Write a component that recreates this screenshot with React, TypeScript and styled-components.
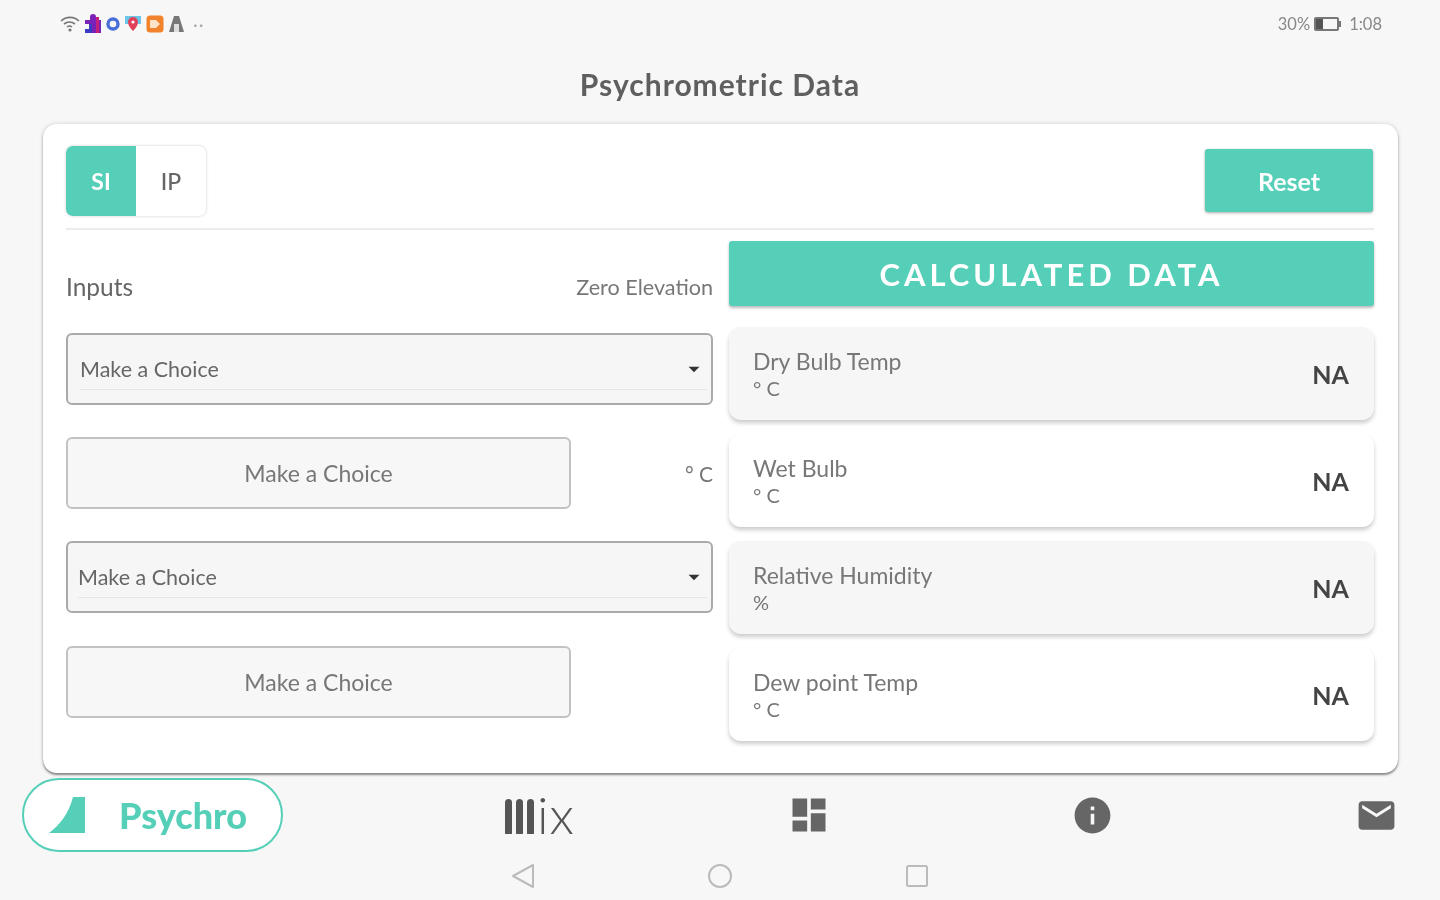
import React from "react";
import styled, { createGlobalStyle } from "styled-components";
import { MdDashboard, MdInfo, MdEmail, MdArrowDropDown } from "react-icons/md";

const TEAL = "#55cfb8";

const results = [
  { label: "Dry Bulb Temp", unit: "° C", tinted: true },
  { label: "Wet Bulb", unit: "° C", tinted: false },
  { label: "Relative Humidity", unit: "%", tinted: true },
  { label: "Dew point Temp", unit: "° C", tinted: false },
];

const App = () => {
  return (
    <Page>
      <GlobalStyle />
      <StatusBar>
        <StatusIcons>
          <svg width="20" height="18" viewBox="0 0 20 18">
            <path d="M1 6a13 13 0 0 1 18 0M4 9a9 9 0 0 1 11 0M7 12a4 4 0 0 1 5 0" fill="none" stroke="#777" strokeWidth="1.6" />
            <circle cx="10" cy="15" r="1.6" fill="#777" />
          </svg>
          <svg width="18" height="20" viewBox="0 0 18 20">
            <path d="M1 6h5V3a3 3 0 0 1 6 0v3h5v13H1v-4h4v-5H1z" fill="#7a22b8" />
            <path d="M1 10h4v5H1v4h7V10z" fill="#3b3bc4" />
            <path d="M12 3h3v16h-3z" fill="#c4207a" />
          </svg>
          <svg width="14" height="14" viewBox="0 0 14 14">
            <circle cx="7" cy="7" r="5" fill="none" stroke="#4a6fd8" strokeWidth="3.4" />
          </svg>
          <svg width="18" height="18" viewBox="0 0 18 18">
            <path d="M1 1h16v8H1z" fill="#6cc6e8" />
            <path d="M9 16c-3-3-5-6-5-9a5 5 0 0 1 10 0c0 3-2 6-5 9z" fill="#e0405a" />
            <circle cx="9" cy="7" r="1.6" fill="#fff" />
          </svg>
          <svg width="18" height="18" viewBox="0 0 18 18">
            <rect x="0.5" y="0.5" width="17" height="17" rx="3.5" fill="#f2822c" />
            <path d="M4 5h6l4 4-4 4H4z" fill="#ffe3c8" />
          </svg>
          <svg width="17" height="18" viewBox="0 0 17 18">
            <path d="M6 1h5l5 16H1z" fill="#777" />
            <rect x="6" y="9" width="5" height="8" fill="#ddd" />
          </svg>
          <StatusDots>··</StatusDots>
        </StatusIcons>
        <StatusRight>
          30%
          <BatteryIcon>
            <BatteryLevel />
          </BatteryIcon>
          <BatteryTip />
          <StatusTime>1:08</StatusTime>
        </StatusRight>
      </StatusBar>

      <PageTitle>Psychrometric Data</PageTitle>

      <Card>
        <CardHeader>
          <UnitToggle>
            <UnitOption $active>SI</UnitOption>
            <UnitOption>IP</UnitOption>
          </UnitToggle>
          <ResetButton>Reset</ResetButton>
        </CardHeader>

        <Columns>
          <InputsColumn>
            <InputsHeading>
              <InputsLabel>Inputs</InputsLabel>
              <ElevationLabel>Zero Elevation</ElevationLabel>
            </InputsHeading>
            <SelectField $inset={12}>
              <SelectInner>
                <SelectText>Make a Choice</SelectText>
                <MdArrowDropDown size={26} color="#333" />
              </SelectInner>
            </SelectField>
            <ValueRow>
              <ValueField>Make a Choice</ValueField>
              <ValueUnit>° C</ValueUnit>
            </ValueRow>
            <SelectField $inset={10}>
              <SelectInner>
                <SelectText>Make a Choice</SelectText>
                <MdArrowDropDown size={26} color="#333" />
              </SelectInner>
            </SelectField>
            <ValueRow>
              <ValueField>Make a Choice</ValueField>
            </ValueRow>
          </InputsColumn>

          <ResultsColumn>
            <ResultsBanner>CALCULATED DATA</ResultsBanner>
            <ResultsList>
              {results.map((item) => (
                <ResultCard key={item.label} $tinted={item.tinted}>
                  <ResultText>
                    <ResultLabel>{item.label}</ResultLabel>
                    <ResultUnit>{item.unit}</ResultUnit>
                  </ResultText>
                  <ResultValue>NA</ResultValue>
                </ResultCard>
              ))}
            </ResultsList>
          </ResultsColumn>
        </Columns>
      </Card>

      <BottomNav>
        <ActivePill>
          <svg width="38" height="38" viewBox="0 0 38 38">
            <path d="M1 37C12 29 21 17 25 1h12v36z" fill={TEAL} />
          </svg>
          <PillLabel>Psychro</PillLabel>
        </ActivePill>
        <MixLogo>
          <MixBars>
            <MixBar />
            <MixBar />
            <MixBar />
          </MixBars>
          <MixText>ix</MixText>
        </MixLogo>
        <NavIcon $gap={212}>
          <MdDashboard size={44} color="#666" />
        </NavIcon>
        <NavIcon $gap={240}>
          <MdInfo size={43} color="#666" />
        </NavIcon>
        <NavIcon $gap={241}>
          <MdEmail size={43} color="#666" />
        </NavIcon>
      </BottomNav>

      <SystemNav>
        <svg width="26" height="28" viewBox="0 0 26 28">
          <path d="M23 3v22L3 14z" fill="none" stroke="#bbb" strokeWidth="2" strokeLinejoin="round" />
        </svg>
        <svg width="26" height="28" viewBox="0 0 26 28">
          <circle cx="13" cy="14" r="11" fill="none" stroke="#bbb" strokeWidth="2" />
        </svg>
        <svg width="26" height="28" viewBox="0 0 26 28">
          <rect x="3" y="4" width="20" height="20" rx="1.5" fill="none" stroke="#bbb" strokeWidth="2" />
        </svg>
      </SystemNav>
    </Page>
  );
};

export default App;

const GlobalStyle = createGlobalStyle`
  html, body {
    margin: 0;
    padding: 0;
    background: #f7f7f7;
  }
  * {
    box-sizing: border-box;
  }
`;
const Page = styled.div`
  width: 1440px;
  height: 900px;
  overflow: hidden;
  display: flex;
  flex-direction: column;
  font-family: "Lato", "Open Sans", sans-serif;
  color: #555;
  filter: blur(0.7px);
`;
const StatusBar = styled.div`
  flex-shrink: 0;
  height: 47px;
  padding: 0 58px 0 60px;
  display: flex;
  align-items: center;
  justify-content: space-between;
`;
const StatusIcons = styled.div`
  display: flex;
  align-items: center;
  gap: 4px;
`;
const StatusDots = styled.span`
  margin-left: 4px;
  font-size: 18px;
  letter-spacing: 1px;
  color: #aaa;
`;
const StatusRight = styled.div`
  display: flex;
  align-items: center;
  font-size: 16.5px;
  color: #888;
`;
const BatteryIcon = styled.div`
  width: 25px;
  height: 14px;
  margin-left: 4px;
  border: 2px solid #777;
  border-radius: 2px;
`;
const BatteryLevel = styled.div`
  width: 7px;
  height: 100%;
  background: #555;
`;
const BatteryTip = styled.div`
  width: 2px;
  height: 6px;
  margin-right: 8px;
  background: #777;
`;
const StatusTime = styled.span`
  color: #888;
`;
const PageTitle = styled.h1`
  flex-shrink: 0;
  margin: 0;
  height: 77px;
  padding-top: 18px;
  font-size: 30px;
  line-height: 38px;
  font-weight: 700;
  letter-spacing: 1px;
  text-align: center;
  color: #5f5f5f;
`;
const Card = styled.div`
  flex-shrink: 0;
  width: 1355px;
  height: 649px;
  margin-left: 43px;
  padding: 22px 24px 0 23px;
  background: #fff;
  border-radius: 14px;
  box-shadow: 0 2px 2px #8d8d8d, 0 0 4px #ccc;
`;
const CardHeader = styled.div`
  height: 84px;
  padding-bottom: 13px;
  display: flex;
  align-items: center;
  justify-content: space-between;
  border-bottom: 2px solid #ececec;
`;
const UnitToggle = styled.div`
  width: 140px;
  height: 70px;
  display: flex;
  border-radius: 7px;
  box-shadow: 0 0 3px #ccc;
`;
const UnitOption = styled.div<{ $active?: boolean }>`
  flex: 1;
  display: flex;
  align-items: center;
  justify-content: center;
  font-size: 23px;
  font-weight: ${({ $active }) => ($active ? 700 : 500)};
  color: ${({ $active }) => ($active ? "#fff" : "#666")};
  background: ${({ $active }) => ($active ? TEAL : "transparent")};
  border-radius: ${({ $active }) => ($active ? "7px 0 0 7px" : "0 7px 7px 0")};
`;
const ResetButton = styled.button`
  width: 168px;
  height: 63px;
  margin-right: 1px;
  border: none;
  border-radius: 3px;
  background: ${TEAL};
  box-shadow: 0 1px 3px #aaa;
  color: #fff;
  font-family: inherit;
  font-size: 25px;
  font-weight: 700;
`;
const Columns = styled.div`
  display: flex;
  gap: 16px;
  padding-top: 11px;
`;
const InputsColumn = styled.div`
  width: 647px;
  display: flex;
  flex-direction: column;
`;
const InputsHeading = styled.div`
  height: 92px;
  padding-bottom: 1px;
  display: flex;
  align-items: center;
  justify-content: space-between;
`;
const InputsLabel = styled.span`
  font-size: 24.5px;
  color: #666;
`;
const ElevationLabel = styled.span`
  font-size: 21.6px;
  color: #777;
`;
const SelectField = styled.div<{ $inset: number }>`
  height: 72px;
  padding: 0 4px 13px ${({ $inset }) => $inset}px;
  display: flex;
  background: #f6f6f6;
  border: 2px solid #aaa;
  border-radius: 6px;
`;
const SelectInner = styled.div`
  flex: 1;
  padding-top: 13px;
  display: flex;
  align-items: center;
  justify-content: space-between;
  border-bottom: 1px solid #e6e6e6;
`;
const SelectText = styled.span`
  font-size: 21.5px;
  color: #666;
`;
const ValueRow = styled.div`
  margin: 32px 0;
  height: 72px;
  display: flex;
  align-items: center;
  justify-content: space-between;
  &:last-child {
    margin: 33px 0 0;
  }
`;
const ValueField = styled.div`
  width: 505px;
  height: 100%;
  display: flex;
  align-items: center;
  justify-content: center;
  font-size: 23px;
  color: #777;
  background: #f7f7f7;
  border: 2px solid #c2c2c2;
  border-radius: 6px;
`;
const ValueUnit = styled.span`
  font-size: 21px;
  color: #777;
`;
const ResultsColumn = styled.div`
  width: 645px;
  display: flex;
  flex-direction: column;
`;
const ResultsBanner = styled.div`
  height: 65px;
  display: flex;
  align-items: center;
  justify-content: center;
  background: ${TEAL};
  border-radius: 3px;
  box-shadow: 0 2px 3px #bbb;
  color: #fff;
  font-size: 31px;
  font-weight: 700;
  letter-spacing: 4px;
`;
const ResultsList = styled.div`
  margin-top: 21px;
  display: flex;
  flex-direction: column;
  gap: 14px;
`;
const ResultCard = styled.div<{ $tinted: boolean }>`
  height: 93px;
  padding: 0 25px 0 24px;
  display: flex;
  align-items: center;
  justify-content: space-between;
  border-radius: 12px;
  background: ${({ $tinted }) => ($tinted ? "#f6f6f6" : "#fff")};
  box-shadow: 0 3px 4px #ccc;
`;
const ResultText = styled.div`
  display: flex;
  flex-direction: column;
  color: #777;
`;
const ResultLabel = styled.span`
  font-size: 23px;
  line-height: 28px;
`;
const ResultUnit = styled.span`
  font-size: 20px;
  line-height: 26px;
`;
const ResultValue = styled.span`
  font-size: 25px;
  font-weight: 700;
  color: #444;
`;
const BottomNav = styled.div`
  flex-shrink: 0;
  height: 74px;
  margin-top: 5px;
  padding-left: 22px;
  display: flex;
  align-items: center;
`;
const ActivePill = styled.div`
  width: 261px;
  height: 74px;
  padding-left: 24px;
  display: flex;
  align-items: center;
  gap: 33px;
  background: #fff;
  border: 2px solid ${TEAL};
  border-radius: 37px;
`;
const PillLabel = styled.span`
  font-size: 36px;
  font-weight: 900;
  color: ${TEAL};
`;
const MixLogo = styled.div`
  width: 70px;
  margin-left: 222px;
  display: flex;
  align-items: flex-end;
  justify-content: space-between;
`;
const MixBars = styled.div`
  height: 35px;
  display: flex;
  gap: 4px;
`;
const MixBar = styled.span`
  width: 7px;
  border-radius: 4px 4px 1px 1px;
  background: #555;
`;
const MixText = styled.span`
  margin-bottom: 2px;
  font-size: 52px;
  font-weight: 300;
  line-height: 35px;
  letter-spacing: 1px;
  color: #555;
`;
const NavIcon = styled.div<{ $gap: number }>`
  margin-left: ${({ $gap }) => $gap}px;
  display: flex;
`;
const SystemNav = styled.div`
  flex-shrink: 0;
  height: 48px;
  display: flex;
  align-items: center;
  justify-content: center;
  gap: 171px;
`;
